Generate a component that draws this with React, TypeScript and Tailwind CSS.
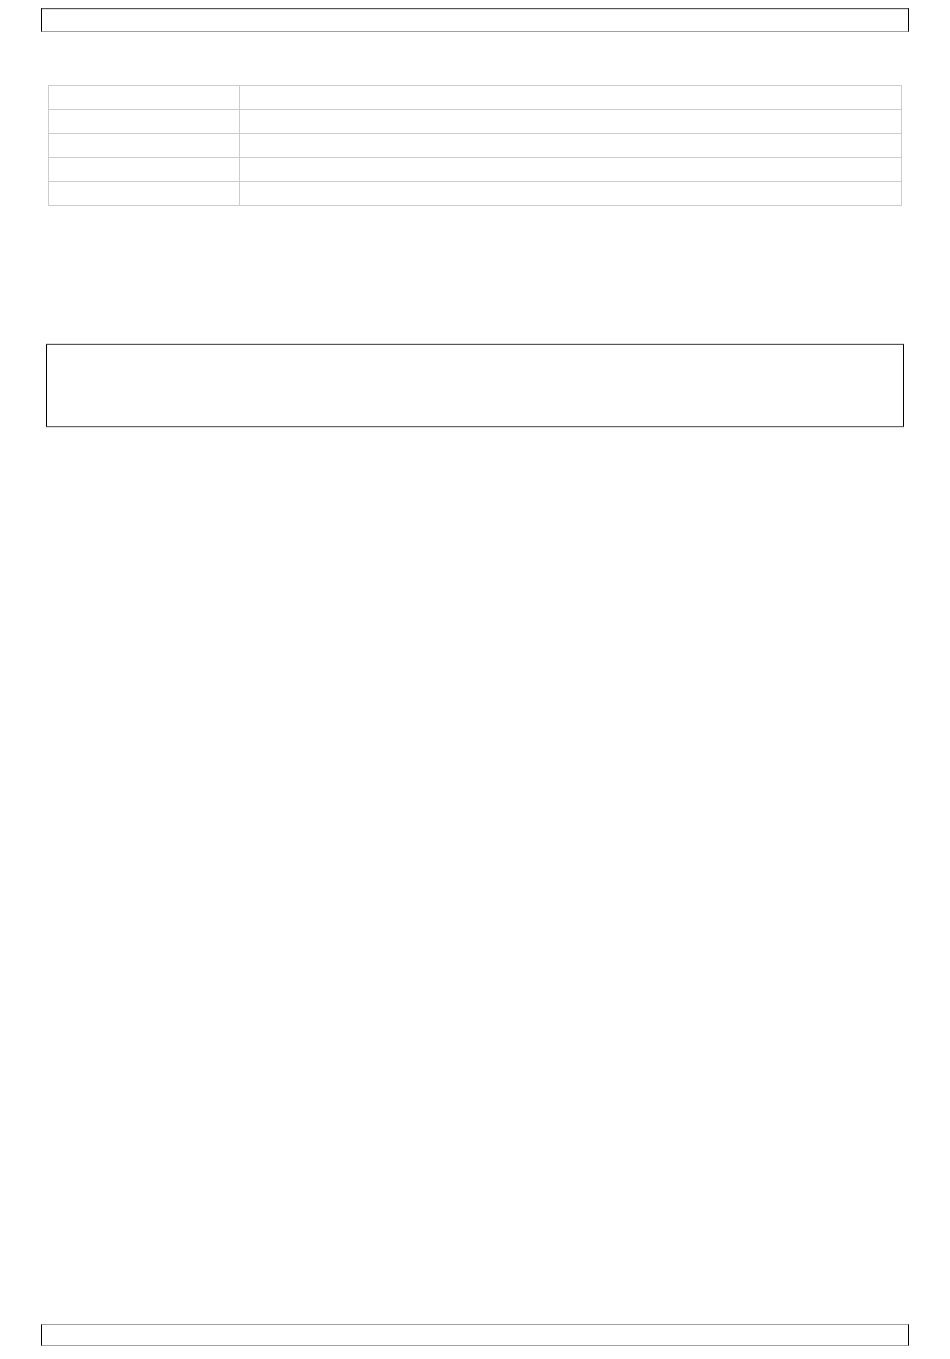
const rows: number[] = [0, 1, 2, 3, 4];

const App = () => {
	return (
		<div className="relative min-h-[1359px] bg-white flex flex-col font-['Liberation_Sans',Arial,sans-serif]">
			<div className="ml-[41px] mt-[8px] w-[868px] h-[24px] border border-t-[#555555] border-l-black border-r-black border-b-[#a0a0a0] shadow-[inset_0_1px_0_#dddddd]" />

			<table className="ml-[48px] mt-[53px] w-[854px] border-collapse border border-[#cccccc] border-t-[#dddddd] table-fixed">
				<tbody>
					{rows.map((r) => (
						<tr key={r} className="h-[24px]">
							<td className="w-[191px] border border-[#cccccc] p-0" />
							<td className="border border-[#cccccc] p-0" />
						</tr>
					))}
				</tbody>
			</table>

			<div className="ml-[46px] mt-[138px] w-[858px] h-[83px] border border-t-[#555555] border-l-black border-r-black border-b-[#666666] shadow-[0_-1px_0_#dddddd,0_1px_0_#dddddd]" />

			<div className="mt-auto mb-[13px] ml-[41px] w-[868px] h-[22px] border border-t-[#a0a0a0] border-b-[#a0a0a0] border-l-black border-r-black" />
		</div>
	);
};

export default App;
